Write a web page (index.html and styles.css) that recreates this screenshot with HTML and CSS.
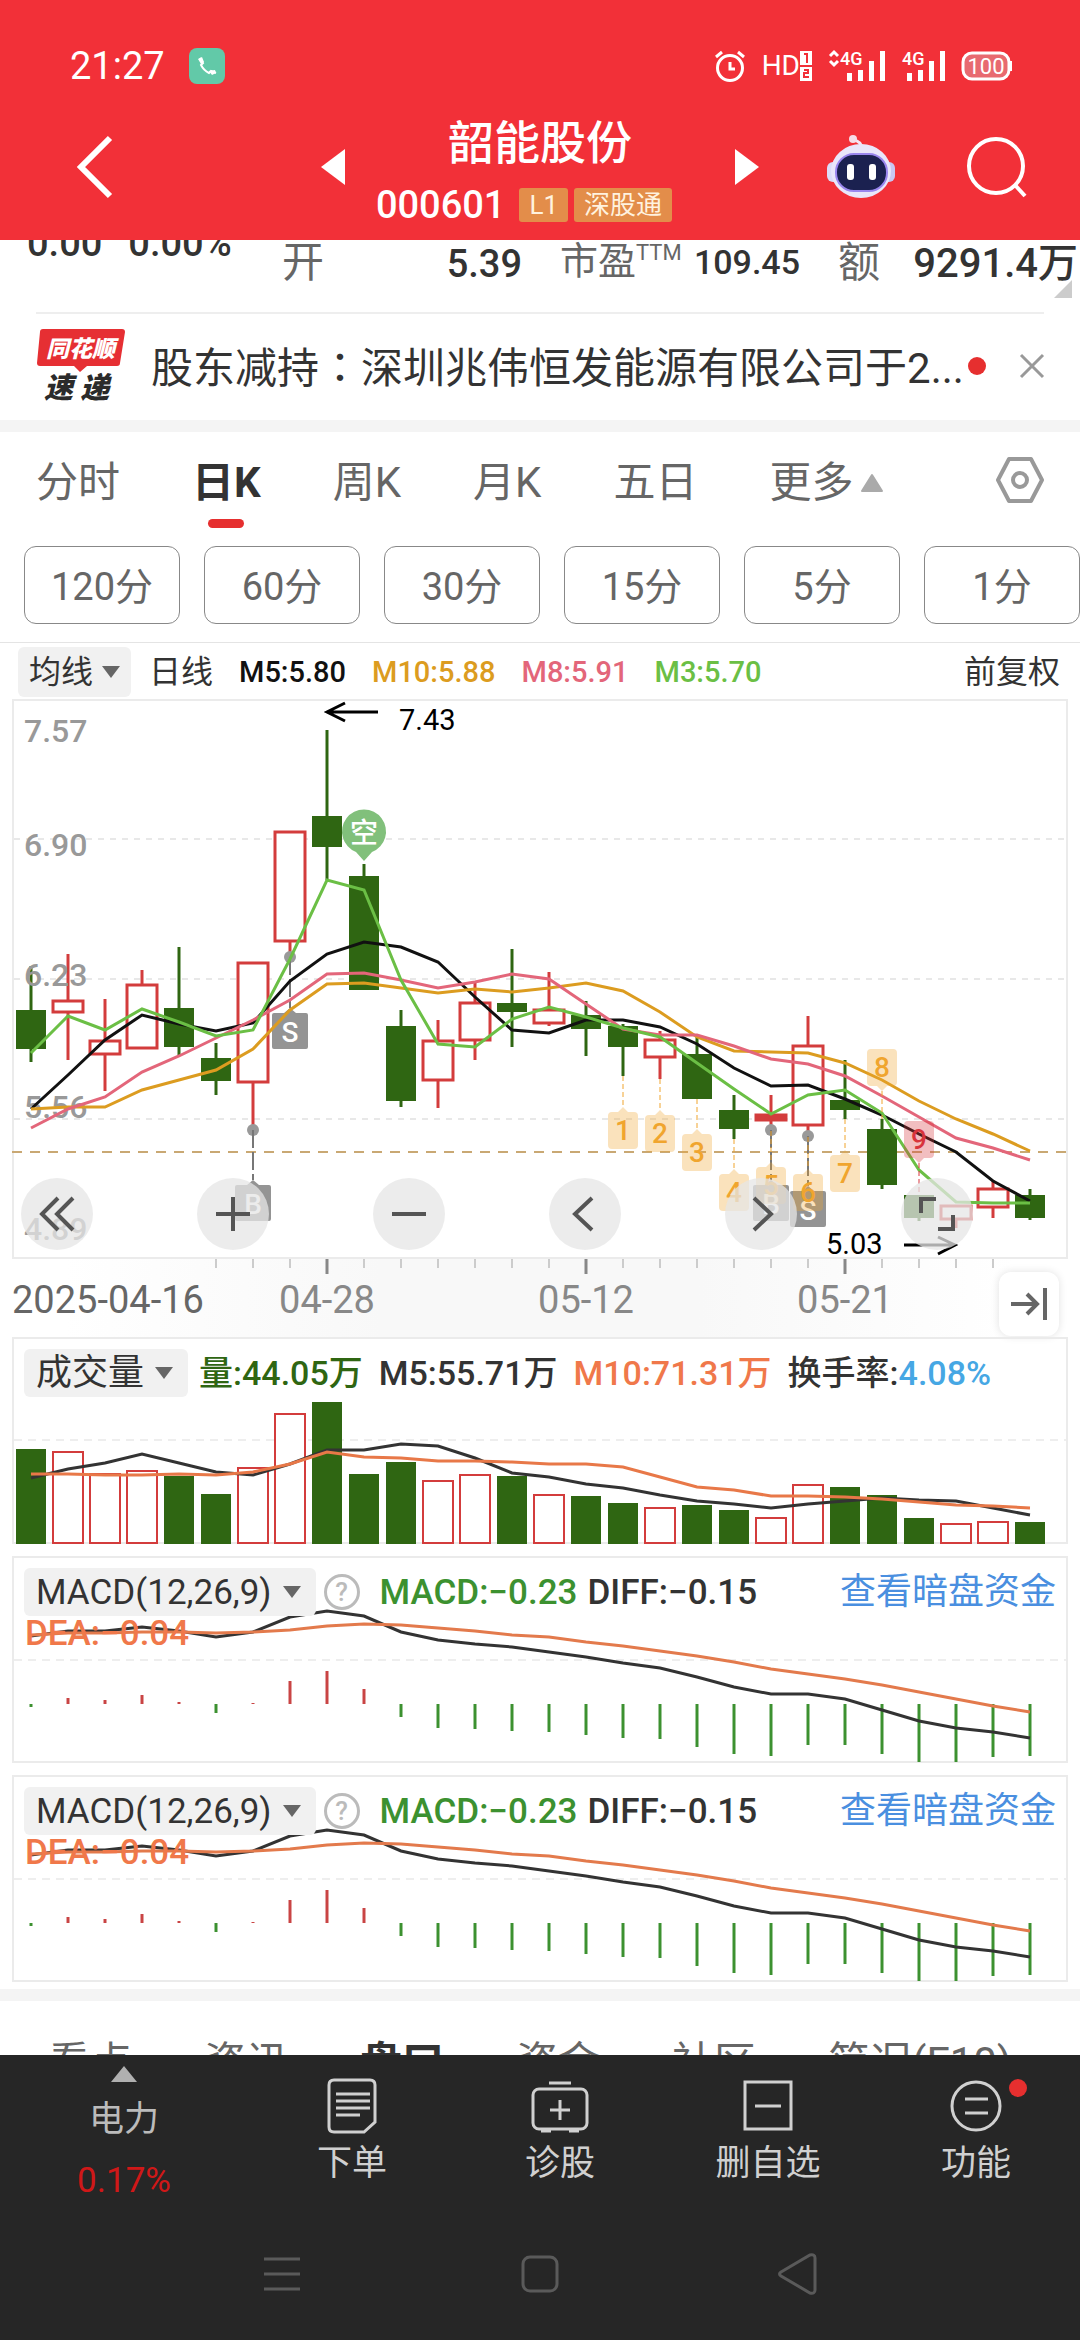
FILE: index.html
```html
<!DOCTYPE html>
<html lang="zh-CN">
<head>
  <meta charset="UTF-8">
  <meta name="viewport" content="width=device-width, initial-scale=1.0">
  <title>韶能股份 000601</title>
  <link rel="stylesheet" href="styles.css">
</head>
<body>
  <header class="header">
    <div class="status">
      <span class="clock">21:27</span>
      <svg class="phone" width="36" height="36" viewBox="0 0 36 36"><rect width="36" height="36" rx="8" fill="#62c9a8"/><path d="M11 10l3 5-2 2c2 4 4 6 8 8l2-2 5 2" fill="none" stroke="#fff" stroke-width="2"/><path d="M9 11l4-2 2 5-3 2zM20 23l6-1 1 3-4 2z" fill="#fff"/></svg>
      <div class="status-icons">
        <svg width="32" height="32" viewBox="0 0 32 32" fill="none" stroke="#fff" stroke-width="3"><circle cx="16" cy="18" r="12.5"/><path d="M16 12v7h5M2 7l6-5M30 7l-6-5"/></svg>
        <span class="hd">HD<svg width="12" height="30" viewBox="0 0 12 30"><path d="M0 0h12v14H0zM0 16h12v14H0z" fill="#fff"/><path d="M4 3h3v9M4 19h4v3H4v4h5" fill="none" stroke="#f23038" stroke-width="2"/></svg></span>
        <svg width="58" height="32" viewBox="0 0 58 32"><path d="M2 6l4-4 4 4M2 11l4 4 4-4" fill="none" stroke="#fff" stroke-width="3"/><text class="net" x="12" y="15">4G</text><path d="M19 23h5v8h-5zM30 20h5v11h-5zM41 11h5v20h-5zM52 1h5v30h-5z" fill="#fff"/></svg>
        <svg width="44" height="32" viewBox="0 0 44 32"><text class="net" x="0" y="15">4G</text><path d="M5 23h5v8H5zM16 20h5v11h-5zM27 11h5v20h-5zM38 1h5v30h-5z" fill="#fff"/></svg>
        <svg width="50" height="30" viewBox="0 0 50 30"><rect x="1" y="2" width="46" height="26" rx="9" fill="#e86a70" stroke="#fff" stroke-width="3"/><path d="M49 10v10" stroke="#fff" stroke-width="2"/><text class="power" x="24" y="23">100</text></svg>
      </div>
    </div>
    <div class="title-bar">
      <div class="title-left">
        <button class="icon-button" aria-label="返回"><svg width="36" height="64" viewBox="0 0 36 64"><path d="M33 3L4 32l29 29" fill="none" stroke="#fff" stroke-width="6"/></svg></button>
        <button class="icon-button" aria-label="上一只"><svg width="24" height="36" viewBox="0 0 24 36"><path d="M24 0v36L0 18z" fill="#fff"/></svg></button>
      </div>
      <div class="title">
        <h1>韶能股份</h1>
        <div class="code">000601 <span class="tag">L1</span><span class="tag tag-wide">深股通</span></div>
      </div>
      <div class="title-right">
        <button class="icon-button" aria-label="下一只"><svg width="24" height="36" viewBox="0 0 24 36"><path d="M0 0v36l24-18z" fill="#fff"/></svg></button>
        <button class="icon-button robot" aria-label="智能助手"><svg width="68" height="64" viewBox="0 0 68 64"><path d="M26 5q9 1 9 10" fill="none" stroke="#f3e6f6" stroke-width="3"/><circle cx="26" cy="4" r="4" fill="#f6dbe6"/><rect y="27" width="12" height="20" rx="6" fill="#dcdcf8"/><rect x="56" y="27" width="12" height="20" rx="6" fill="#c9c6f2"/><ellipse cx="34" cy="36" rx="30" ry="27" fill="#e9e6fa"/><rect x="9" y="19" width="51" height="37" rx="18" fill="#1b2150" stroke="#9a86ee" stroke-width="2"/><rect x="20" y="29" width="7" height="16" rx="3" fill="#fff"/><rect x="42" y="29" width="7" height="16" rx="3" fill="#fff"/></svg></button>
        <button class="icon-button search" aria-label="搜索"><svg width="60" height="62" viewBox="0 0 60 62" fill="none" stroke="#fff" stroke-width="4"><circle cx="29" cy="30" r="27"/><path d="M48 49l10 11"/></svg></button>
      </div>
    </div>
  </header>

  <main class="main">
    <section class="quote">
      <div class="change"><b>0.00</b><b>0.00%</b></div>
      <div class="pair"><span>开</span><b>5.39</b></div>
      <div class="pair pair-small"><span>市盈<sup>TTM</sup></span><b>109.45</b></div>
      <div class="pair pair-last"><span>额</span><b>9291.4万</b><i class="corner"></i></div>
    </section>

    <section class="news">
      <svg class="news-logo" width="90" height="76" viewBox="0 0 90 76"><path d="M7 1h79q3 0 3 3l-5 31q0 3-3 3H51l-7 6-6-6H4q-3 0-3-3L4 4q0-3 3-3z" fill="#e62f33"/><text class="logo-top" x="10" y="29">同花顺</text><text class="logo-bottom" x="8" y="70">速 递</text></svg>
      <a class="news-text" href="#">股东减持<span class="colon" lang="zh-TW">：</span>深圳兆伟恒发能源有限公司于2...</a>
      <i class="dot"></i>
      <button class="icon-button" aria-label="关闭"><svg width="24" height="24" viewBox="0 0 24 24"><path d="M1 1l22 22M23 1L1 23" stroke="#999" stroke-width="3"/></svg></button>
    </section>

    <nav class="periods">
      <button>分时</button>
      <button class="active">日K</button>
      <button>周K</button>
      <button>月K</button>
      <button>五日</button>
      <button>更多<svg width="22" height="18" viewBox="0 0 22 18"><path d="M11 1l10 16H1z" fill="#aaa" stroke="#aaa" stroke-width="2" stroke-linejoin="round"/></svg></button>
      <button class="setting" aria-label="设置"><svg width="48" height="48" viewBox="0 0 48 48" fill="none" stroke="#999" stroke-width="4" stroke-linejoin="round"><path d="M13 3h22l11 21-11 21H13L2 24z"/><circle cx="24" cy="24" r="7"/></svg></button>
    </nav>

    <div class="minutes">
      <button>120分</button>
      <button>60分</button>
      <button>30分</button>
      <button>15分</button>
      <button>5分</button>
      <button>1分</button>
    </div>

    <div class="legend">
      <button class="picker picker-small">均线<i class="caret"></i></button>
      <span class="cn">日线</span>
      <span class="m5">M5:5.80</span>
      <span class="m10">M10:5.88</span>
      <span class="m8">M8:5.91</span>
      <span class="m3">M3:5.70</span>
      <span class="cn adjust">前复权</span>
    </div>

    <section class="panel">
      <svg id="kline" class="chart" viewBox="0 0 1056 560"></svg>
      <div class="controls">
        <button aria-label="最早"><svg width="34" height="34" viewBox="0 0 34 34"><path d="M18 1L2 17l16 16M33 1L17 17l16 16"/></svg></button>
        <button aria-label="放大"><svg width="34" height="34" viewBox="0 0 34 34"><path d="M0 17h34M17 0v34"/></svg></button>
        <button aria-label="缩小"><svg width="34" height="34" viewBox="0 0 34 34"><path d="M0 17h34"/></svg></button>
        <button aria-label="左移"><svg width="34" height="34" viewBox="0 0 34 34"><path d="M24 1L7 17l17 16"/></svg></button>
        <button aria-label="右移"><svg width="34" height="34" viewBox="0 0 34 34"><path d="M10 1l17 16-17 16"/></svg></button>
        <button aria-label="全屏"><svg width="36" height="36" viewBox="0 0 36 36"><path d="M2 17V3h15M34 19v14H19"/></svg></button>
      </div>
    </section>

    <div class="axis">
      <svg id="axis" class="chart" viewBox="0 0 1056 78"></svg>
      <button class="latest" aria-label="最新"><svg width="36" height="34" viewBox="0 0 36 34" fill="none" stroke="#666" stroke-width="4"><path d="M0 17h25M16 7l10 10-10 10M34 1v32"/></svg></button>
    </div>

    <section class="panel">
      <svg id="volume" class="chart" viewBox="0 0 1056 207"></svg>
      <div class="panel-head volume-head">
        <button class="picker">成交量<i class="caret"></i></button>
        <span class="vol">量:44.05万</span>
        <span>M5:55.71万</span>
        <span class="orange">M10:71.31万</span>
        <span>换手率:<em>4.08%</em></span>
      </div>
    </section>

    <section class="panel">
      <svg class="chart macd" viewBox="0 0 1056 207"></svg>
      <div class="panel-head">
        <button class="picker">MACD(12,26,9)<i class="caret"></i></button>
        <button class="help" aria-label="说明">?</button>
        <span class="green">MACD:−0.23</span>
        <span class="diff">DIFF:−0.15</span>
        <a href="#">查看暗盘资金</a>
      </div>
      <span class="dea">DEA:−0.04</span>
    </section>

    <section class="panel">
      <svg class="chart macd" viewBox="0 0 1056 207"></svg>
      <div class="panel-head">
        <button class="picker">MACD(12,26,9)<i class="caret"></i></button>
        <button class="help" aria-label="说明">?</button>
        <span class="green">MACD:−0.23</span>
        <span class="diff">DIFF:−0.15</span>
        <a href="#">查看暗盘资金</a>
      </div>
      <span class="dea">DEA:−0.04</span>
    </section>

    <nav class="sections">
      <button>看点</button>
      <button>资讯</button>
      <button class="active">盘口</button>
      <button>资金</button>
      <button>社区</button>
      <button>简况(F10)</button>
    </nav>
  </main>

  <footer class="footer">
    <nav class="tools">
      <button class="industry">
        <svg width="26" height="16" viewBox="0 0 26 16"><path d="M13 0l13 16H0z" fill="#b0b0b0"/></svg>
        <span>电力</span>
        <b>0.17%</b>
      </button>
      <button>
        <svg width="58" height="58" viewBox="0 0 58 58"><path d="M11 4h36q5 0 5 5v37L41 56H11q-5 0-5-5V9q0-5 5-5z"/><path d="M13 18h34M13 25h34M13 32h34M13 39h24"/></svg>
        下单
      </button>
      <button>
        <svg width="58" height="58" viewBox="0 0 58 58"><rect x="2" y="13" width="54" height="40" rx="6"/><path d="M18 7h22M19 34h20M29 24v20"/><path d="M10 55h10M38 55h10"/></svg>
        诊股
      </button>
      <button>
        <svg width="58" height="58" viewBox="0 0 58 58"><path d="M6 6h46v47H6zM16 30h26"/></svg>
        删自选
      </button>
      <button>
        <svg width="58" height="58" viewBox="0 0 58 58"><circle cx="29" cy="30" r="24"/><path d="M18 23h23M18 37h23"/></svg>
        功能
        <i class="dot"></i>
      </button>
    </nav>
    <div class="system">
      <button aria-label="任务"><svg width="40" height="42" viewBox="0 0 40 42"><path d="M2 6h36M2 21h36M2 36h36"/></svg></button>
      <button aria-label="主页"><svg width="40" height="42" viewBox="0 0 40 42"><rect x="3" y="4" width="34" height="34" rx="7"/></svg></button>
      <button aria-label="后退"><svg width="40" height="42" viewBox="0 0 40 42"><path d="M3 19L32 2q5-1 5 3v32q0 4-5 3L3 23q-3-2 0-4z"/></svg></button>
    </div>
  </footer>

  <script>
    const GREEN = '#2f6612';
    const RED = '#d33c3c';
    const STEP = 37;

    // [up?, body top, body bottom, high, low]
    const candles = [
      [0, 311, 350, 267, 363], [1, 301, 314, 255, 361], [1, 341, 356, 300, 392], [1, 285, 350, 271, 350],
      [0, 309, 348, 248, 357], [0, 359, 382, 344, 396], [1, 263, 384, 263, 432], [1, 132, 243, 132, 258],
      [0, 117, 148, 31, 181], [0, 177, 291, 165, 291], [0, 327, 402, 311, 408], [1, 341, 382, 321, 409],
      [1, 303, 342, 283, 361], [0, 304, 313, 250, 348], [1, 310, 325, 273, 327], [0, 316, 330, 302, 357],
      [0, 327, 348, 325, 377], [1, 340, 359, 332, 380], [0, 355, 400, 338, 400], [0, 411, 430, 396, 440],
      [1, 415, 422, 396, 432], [1, 346, 427, 317, 438], [0, 401, 411, 361, 420], [0, 430, 486, 420, 490],
      [0, 496, 519, 496, 522], [1, 506, 521, 506, 529], [1, 489, 509, 481, 519], [0, 496, 519, 490, 521]
    ];
    const ma5 = [410, 376, 341, 316, 325, 332, 324, 282, 255, 243, 248, 263, 298, 331, 334, 321, 321, 328, 345, 369, 387, 386, 400, 416, 435, 453, 482, 502];
    const ma10 = [410, 408, 408, 391, 381, 371, 350, 311, 285, 284, 289, 294, 290, 293, 289, 284, 292, 313, 338, 352, 353, 354, 364, 381, 402, 420, 435, 452];
    const ma8 = [429, 410, 398, 373, 357, 339, 321, 301, 275, 274, 281, 289, 283, 275, 280, 305, 330, 336, 336, 347, 360, 365, 377, 397, 418, 439, 449, 461];
    const ma3 = [354, 317, 331, 310, 323, 337, 331, 260, 181, 191, 281, 345, 348, 320, 308, 318, 329, 338, 364, 390, 415, 396, 391, 414, 471, 503, 504, 504];

    const volumes = [112, 114, 136, 133, 139, 157, 130, 76, 65, 137, 125, 143, 137, 139, 157, 159, 166, 170, 168, 173, 180, 147, 150, 158, 181, 186, 184, 185];
    const vol5 = [141, 132, 126, 117, 126, 135, 138, 127, 113, 113, 107, 109, 121, 136, 140, 147, 151, 158, 164, 167, 171, 167, 164, 161, 163, 164, 171, 178];
    const vol10 = [137, 137, 138, 138, 137, 138, 135, 127, 115, 120, 121, 124, 124, 125, 127, 127, 130, 140, 150, 153, 159, 159, 160, 162, 165, 168, 169, 171];

    const macd = [151, 142, 144, 139, 146, 157, 147, 125, 115, 133, 161, 172, 173, 175, 176, 179, 182, 183, 191, 198, 200, 189, 189, 198, 206, 206, 201, 200];
    const diff = [80, 75, 75, 71, 75, 81, 76, 61, 55, 60, 76, 84, 88, 91, 96, 101, 107, 112, 121, 131, 138, 138, 143, 154, 165, 172, 176, 182];
    const dea = [79, 77, 77, 76, 76, 77, 76, 74, 70, 68, 69, 72, 75, 79, 81, 86, 90, 95, 100, 106, 113, 118, 123, 129, 136, 143, 150, 156];

    function cx(i) {
      return 19 + STEP * i;
    }

    function line(x1, y1, x2, y2, color, width = 2, dash = '') {
      return `<line x1="${x1}" y1="${y1}" x2="${x2}" y2="${y2}" stroke="${color}" stroke-width="${width}" stroke-dasharray="${dash}"/>`;
    }

    function curve(data, color) {
      const points = data.map((y, i) => `${cx(i)},${y}`).join(' ');
      return `<polyline points="${points}" fill="none" stroke="${color}" stroke-width="3"/>`;
    }

    function bar(i, top, bottom, up, width) {
      if (!up) {
        return `<rect x="${cx(i) - 15}" y="${top}" width="30" height="${bottom - top}" fill="${GREEN}"/>`;
      }
      return `<rect x="${cx(i) - 15}" y="${top + 1}" width="30" height="${bottom - top - 2}" fill="#fff" stroke="${RED}" stroke-width="${width}"/>`;
    }

    function frame(height) {
      return `<rect x="1" y="1" width="1054" height="${height - 2}" fill="none" stroke="#ebebeb" stroke-width="2"/>`;
    }

    function trade(i, from, top, letter) {
      const x = cx(i);
      return `<circle cx="${x}" cy="${from}" r="6" fill="#999"/>` + line(x, from, x, top - 5, '#777', 2, '18 4') +
        `<path d="M${x - 16} ${top}h10l6-5 6 5h10q2 0 2 2v32q0 2-2 2h-32q-2 0-2-2v-32q0-2 2-2z" fill="#949494"/>` +
        `<text class="trade" x="${x}" y="${top + 29}">${letter}</text>`;
    }

    function mark(i, top, n) {
      const x = cx(i);
      const color = n === 9 ? '#d8343c' : '#f0a52e';
      let tip = `h6l5-5 5 5h6q4 0 4 4v29q0 4-4 4h-22q-4 0-4-4v-29q0-4 4-4z`;
      let stem = line(x, candles[i][4], x, top - 5, color, 1, '5 3');
      if (n > 7) {
        tip = `h22q4 0 4 4v29q0 4-4 4h-6l-5 5-5-5h-6q-4 0-4-4v-29q0-4 4-4z`;
        stem = line(x, top + 42, x, candles[i][3], color, 1, '5 3');
      }
      return stem + `<path d="M${x - 11} ${top}${tip}" fill="${color}" opacity="0.32"/>` +
        `<text class="mark" x="${x}" y="${top + 28}" fill="${color}">${n}</text>`;
    }

    function drawKline() {
      let html = frame(560);
      [140, 280, 420].forEach(y => html += line(2, y, 1054, y, '#e8e8e8', 2, '6 6'));
      html += line(0, 453, 1054, 453, '#c9a873', 2, '10 8');
      candles.forEach(([up, top, bottom, high, low], i) => {
        html += line(cx(i), high, cx(i), low, up ? RED : GREEN, 3) + bar(i, top, bottom, up, 3);
      });
      html += line(cx(20) - 15, 418, cx(20) + 15, 418, RED, 6);
      ['7.57', '6.90', '6.23', '5.56', '4.89'].forEach((t, i) => {
        html += `<text class="price" x="12" y="${[43, 157, 287, 419, 541][i]}">${t}</text>`;
      });
      html += trade(6, 431, 486, 'B') + trade(7, 258, 314, 'S') + trade(20, 431, 486, 'B') + trade(21, 437, 492, 'S');
      html += curve(ma5, '#111') + curve(ma10, '#dc9c20') + curve(ma8, '#e3667a') + curve(ma3, '#6bbf45');
      [413, 416, 435, 475, 468, 475, 456, 350, 422].forEach((top, i) => html += mark(16 + i, top, i + 1));
      html += `<path d="M352 162l-8-9a22 22 0 1 1 16 0z" fill="#81c07b"/><text class="short" x="352" y="144">空</text>`;
      html += `<path d="M366 13h-51M333 4l-18 9 18 9M892 546h51M926 538l17 8-17 9" fill="none" stroke="#000" stroke-width="3"/>`;
      html += `<text class="peak" x="387" y="31">7.43</text><text class="peak" x="814" y="555">5.03</text>`;
      document.getElementById('kline').innerHTML = html;
    }

    function drawAxis() {
      let html = '';
      for (let i = 5; i < 27; i++) {
        const major = [8, 15, 22].includes(i);
        html += line(cx(i), 0, cx(i), major ? 15 : 9, major ? '#888' : '#ccc', major ? 3 : 2);
      }
      html += `<text class="date first" x="0" y="54">2025-04-16</text>`;
      [[8, '04-28'], [15, '05-12'], [22, '05-21']].forEach(([i, t]) => {
        html += `<text class="date" x="${cx(i)}" y="54">${t}</text>`;
      });
      document.getElementById('axis').innerHTML = html;
    }

    function drawVolume() {
      let html = frame(207) + line(2, 103, 1054, 103, '#ddd', 1, '8 6');
      volumes.forEach((top, i) => html += bar(i, top, 207, candles[i][0], 2));
      html += curve(vol5, '#333') + curve(vol10, '#e87848');
      document.getElementById('volume').innerHTML = html;
    }

    function drawMacd(svg) {
      let html = frame(207) + line(2, 104, 1054, 104, '#ddd', 1, '8 6');
      macd.forEach((y, i) => html += line(cx(i), 148, cx(i), y, y < 148 ? '#c94444' : '#3c9130', 3));
      svg.innerHTML = html + curve(diff, '#333') + curve(dea, '#e37a4c');
    }

    drawKline();
    drawAxis();
    drawVolume();
    document.querySelectorAll('.macd').forEach(drawMacd);
  </script>
</body>
</html>
```
FILE: styles.css
```css
* {
  box-sizing: border-box;
}

body {
  display: flex;
  flex-direction: column;
  height: 100vh;
  margin: 0;
  background-color: #fff;
  color: #333;
  font-family: Roboto, "Noto Sans CJK SC", sans-serif;
  font-size: 35px;
  line-height: 1;
}

button {
  padding: 0;
  border: none;
  background: none;
  color: inherit;
  font: inherit;
  cursor: pointer;
}

a {
  color: inherit;
  text-decoration: none;
}

svg {
  display: block;
  flex-shrink: 0;
  overflow: visible;
}

/* header */

.header {
  flex-shrink: 0;
  height: 240px;
  background-color: #f23038;
  color: #fff;
}

.status {
  display: flex;
  align-items: center;
  height: 100px;
  padding: 32px 68px 0 70px;
}

.clock {
  font-size: 38px;
}

.phone {
  margin-left: 24px;
}

.status-icons {
  display: flex;
  align-items: center;
  gap: 16px;
  margin-left: auto;
}

.hd {
  display: flex;
  align-items: center;
  font-size: 28px;
}

.net {
  fill: #fff;
  font-size: 18px;
  font-weight: 500;
}

.power {
  fill: #fff;
  font-size: 22px;
  text-anchor: middle;
}

.title-bar {
  display: grid;
  grid-template-columns: 1fr 390px 1fr;
  align-items: center;
  height: 140px;
}

.title-left {
  display: flex;
  align-items: center;
  justify-content: space-between;
  padding: 0 0 6px 77px;
}

.title-right {
  display: flex;
  align-items: center;
  padding-bottom: 6px;
}

.robot {
  margin-left: 68px;
}

.search {
  margin-left: 72px;
}

.title {
  display: flex;
  flex-direction: column;
  align-items: center;
  gap: 20px;
  padding-top: 4px;
}

.title h1 {
  margin: 0;
  font-size: 46px;
  font-weight: 500;
}

.code {
  display: flex;
  align-items: center;
  gap: 6px;
  padding-right: 32px;
  font-size: 38px;
  font-weight: 500;
}

.tag {
  margin-left: 8px;
  padding: 4px 10px;
  border-radius: 3px;
  background-color: #e38d4a;
  color: #fff2df;
  font-size: 26px;
  font-weight: 400;
}

.tag-wide {
  margin-left: 0;
}

/* quote */

.main {
  flex: 1;
  min-height: 0;
  overflow: hidden;
}

.quote {
  display: grid;
  grid-template-columns: 217fr 240fr 240fr 240fr;
  gap: 38px;
  height: 72px;
  padding: 2px 2px 0 27px;
}

.quote b {
  font-size: 38px;
  font-weight: 500;
}

.change {
  display: flex;
  gap: 26px;
  margin-top: -18px;
}

.pair {
  display: flex;
  align-items: baseline;
  justify-content: space-between;
  color: #666;
  font-size: 42px;
}

.pair b {
  color: #333;
}

.pair-small {
  font-size: 38px;
}

.pair-small b {
  font-size: 34px;
}

.pair sup {
  font-size: 22px;
  line-height: 1;
}

.pair-last {
  position: relative;
}

.pair-last b {
  font-size: 40px;
}

.corner {
  position: absolute;
  top: 38px;
  right: 6px;
  border-bottom: 18px solid #ccc;
  border-left: 18px solid transparent;
}

.news {
  display: flex;
  align-items: center;
  height: 120px;
  padding: 0 36px;
  border-bottom: 12px solid #f4f4f4;
  background: linear-gradient(#eee, #eee) center top / calc(100% - 72px) 2px no-repeat;
}

.logo-top {
  fill: #fff;
  font-size: 23px;
  font-style: italic;
  font-weight: 900;
}

.logo-bottom {
  fill: #2b2b2b;
  font-size: 29px;
  font-style: italic;
  font-weight: 900;
}

.news-text {
  margin-left: 25px;
  padding-top: 2px;
  font-size: 42px;
  white-space: nowrap;
}

.colon {
  font-family: "Noto Sans CJK TC", sans-serif;
}

.dot {
  width: 18px;
  height: 18px;
  border-radius: 50%;
  background-color: #e62f2f;
}

.news .dot {
  margin: 0 auto 0 4px;
}

.periods {
  display: flex;
  gap: 72px;
  height: 102px;
  padding: 0 36px;
  color: #666;
  font-size: 42px;
}

.periods button {
  display: flex;
  align-items: center;
  gap: 8px;
  position: relative;
}

.periods .active {
  color: #333;
  font-weight: 700;
}

.periods .active::after {
  content: "";
  position: absolute;
  bottom: 6px;
  left: 50%;
  width: 36px;
  height: 9px;
  margin-left: -18px;
  border-radius: 5px;
  background-color: #e62f2f;
}

.periods .setting {
  margin-left: auto;
  padding-bottom: 6px;
}

.minutes {
  display: grid;
  grid-template-columns: repeat(6, 1fr);
  gap: 24px;
  padding: 12px 0 18px 24px;
  border-bottom: 1px solid #e4e4e4;
  color: #666;
  font-size: 38px;
}

.minutes button {
  height: 78px;
  padding-top: 3px;
  border: 1px solid #888;
  border-radius: 12px;
}

/* charts */

.legend {
  display: flex;
  align-items: center;
  gap: 26px;
  height: 56px;
  padding: 2px 20px 0 18px;
  font-size: 29px;
  font-weight: 500;
}

.legend .cn {
  font-size: 32px;
  font-weight: 400;
}

.legend .cn:nth-child(2) {
  margin-left: -8px;
}

.legend .adjust {
  margin-left: auto;
}

.m5 {
  color: #111;
}

.m10 {
  color: #dc9c20;
}

.m8 {
  color: #e3667a;
}

.m3 {
  color: #6bbf45;
}

.picker {
  display: flex;
  align-items: center;
  gap: 11px;
  height: 48px;
  padding: 0 15px 0 12px;
  border-radius: 6px;
  background-color: #f1f1f1;
  color: #333;
}

.volume-head .picker {
  font-size: 36px;
}

.picker-small {
  height: 50px;
  padding: 0 11px;
  gap: 9px;
  font-size: 32px;
  font-weight: 400;
}

.caret {
  border-top: 12px solid #666;
  border-right: 9px solid transparent;
  border-left: 9px solid transparent;
}

.panel {
  display: grid;
  margin: 0 12px 12px;
}

.panel > * {
  grid-area: 1 / 1;
}

.chart {
  width: 100%;
  height: auto;
}

.controls {
  display: flex;
  align-self: end;
  justify-content: space-between;
  padding: 0 95px 9px 9px;
}

.controls button {
  display: flex;
  align-items: center;
  justify-content: center;
  width: 72px;
  height: 72px;
  border-radius: 50%;
  background-color: rgba(230, 230, 230, 0.75);
}

.controls svg {
  fill: none;
  stroke: #555;
  stroke-width: 4;
}

.price {
  fill: #999;
  font-size: 32px;
  font-weight: 500;
}

.trade,
.mark,
.short {
  font-size: 28px;
  font-weight: 500;
  text-anchor: middle;
}

.trade,
.short {
  fill: #fff;
}

.peak {
  fill: #000;
  font-size: 29px;
}

.axis {
  display: grid;
  align-items: center;
  margin: -12px 12px 0;
  background: linear-gradient(to right, #fff 5%, #f8f8f8 35%, #f8f8f8 65%, #fff 95%);
}

.axis > * {
  grid-area: 1 / 1;
}

.date {
  fill: #888;
  font-size: 38px;
  text-anchor: middle;
}

.date.first {
  fill: #666;
  text-anchor: start;
}

.latest {
  display: flex;
  align-items: center;
  justify-content: center;
  justify-self: end;
  width: 60px;
  height: 64px;
  margin: 12px 9px 0 0;
  border-radius: 12px;
  background-color: #fff;
  box-shadow: 0 0 8px rgba(0, 0, 0, 0.12);
}

.panel-head {
  display: flex;
  align-items: center;
  align-self: start;
  gap: 20px;
  padding: 12px;
  font-weight: 500;
}

.panel-head .picker {
  font-weight: 400;
}

.panel-head .help {
  width: 36px;
  height: 36px;
  margin: 0 0 0 -12px;
  border: 3px solid #bbb;
  border-radius: 50%;
  color: #bbb;
  font-size: 26px;
}

.panel-head .diff {
  margin-left: -10px;
}

.panel-head a {
  margin-left: auto;
  color: #4a8fe0;
  font-size: 36px;
  font-weight: 400;
}

.panel-head em {
  color: #46a7e4;
  font-style: normal;
}

.volume-head {
  gap: 16px;
  font-size: 34px;
}

.vol {
  margin-left: -5px;
  color: #2f6612;
}

.orange,
.dea {
  color: #f0784a;
}

.green {
  color: #3c9130;
}

.dea {
  align-self: start;
  margin: 60px 0 0 13px;
  font-weight: 500;
}

.sections {
  display: flex;
  gap: 72px;
  margin-top: -5px;
  padding: 41px 48px 30px;
  border-top: 12px solid #f4f4f4;
  color: #666;
  font-size: 42px;
  white-space: nowrap;
}

.sections .active {
  color: #333;
  font-weight: 700;
}

/* footer */

.footer {
  flex-shrink: 0;
  background-color: #262626;
  color: #d0d0d0;
}

.tools {
  display: grid;
  grid-template-columns: 248fr 208fr 208fr 208fr 208fr;
  height: 153px;
}

.tools button {
  display: flex;
  flex-direction: column;
  align-items: center;
  gap: 12px;
  position: relative;
  padding-top: 21px;
  font-size: 35px;
}

.tools svg {
  fill: none;
  stroke: #d0d0d0;
  stroke-width: 3;
}

.tools .industry {
  gap: 20px;
  padding-top: 11px;
  color: #bbb;
}

.industry svg {
  stroke: none;
}

.industry b {
  margin-top: 6px;
  color: #d01818;
  font-weight: 400;
}

.tools .dot {
  position: absolute;
  top: 24px;
  right: 53px;
}

.system {
  display: grid;
  grid-template-columns: repeat(3, 258px);
  justify-content: center;
  height: 132px;
}

.system button {
  display: flex;
  align-items: center;
  justify-content: center;
}

.system svg {
  fill: none;
  stroke: #5a5a5a;
  stroke-width: 3;
}
```
